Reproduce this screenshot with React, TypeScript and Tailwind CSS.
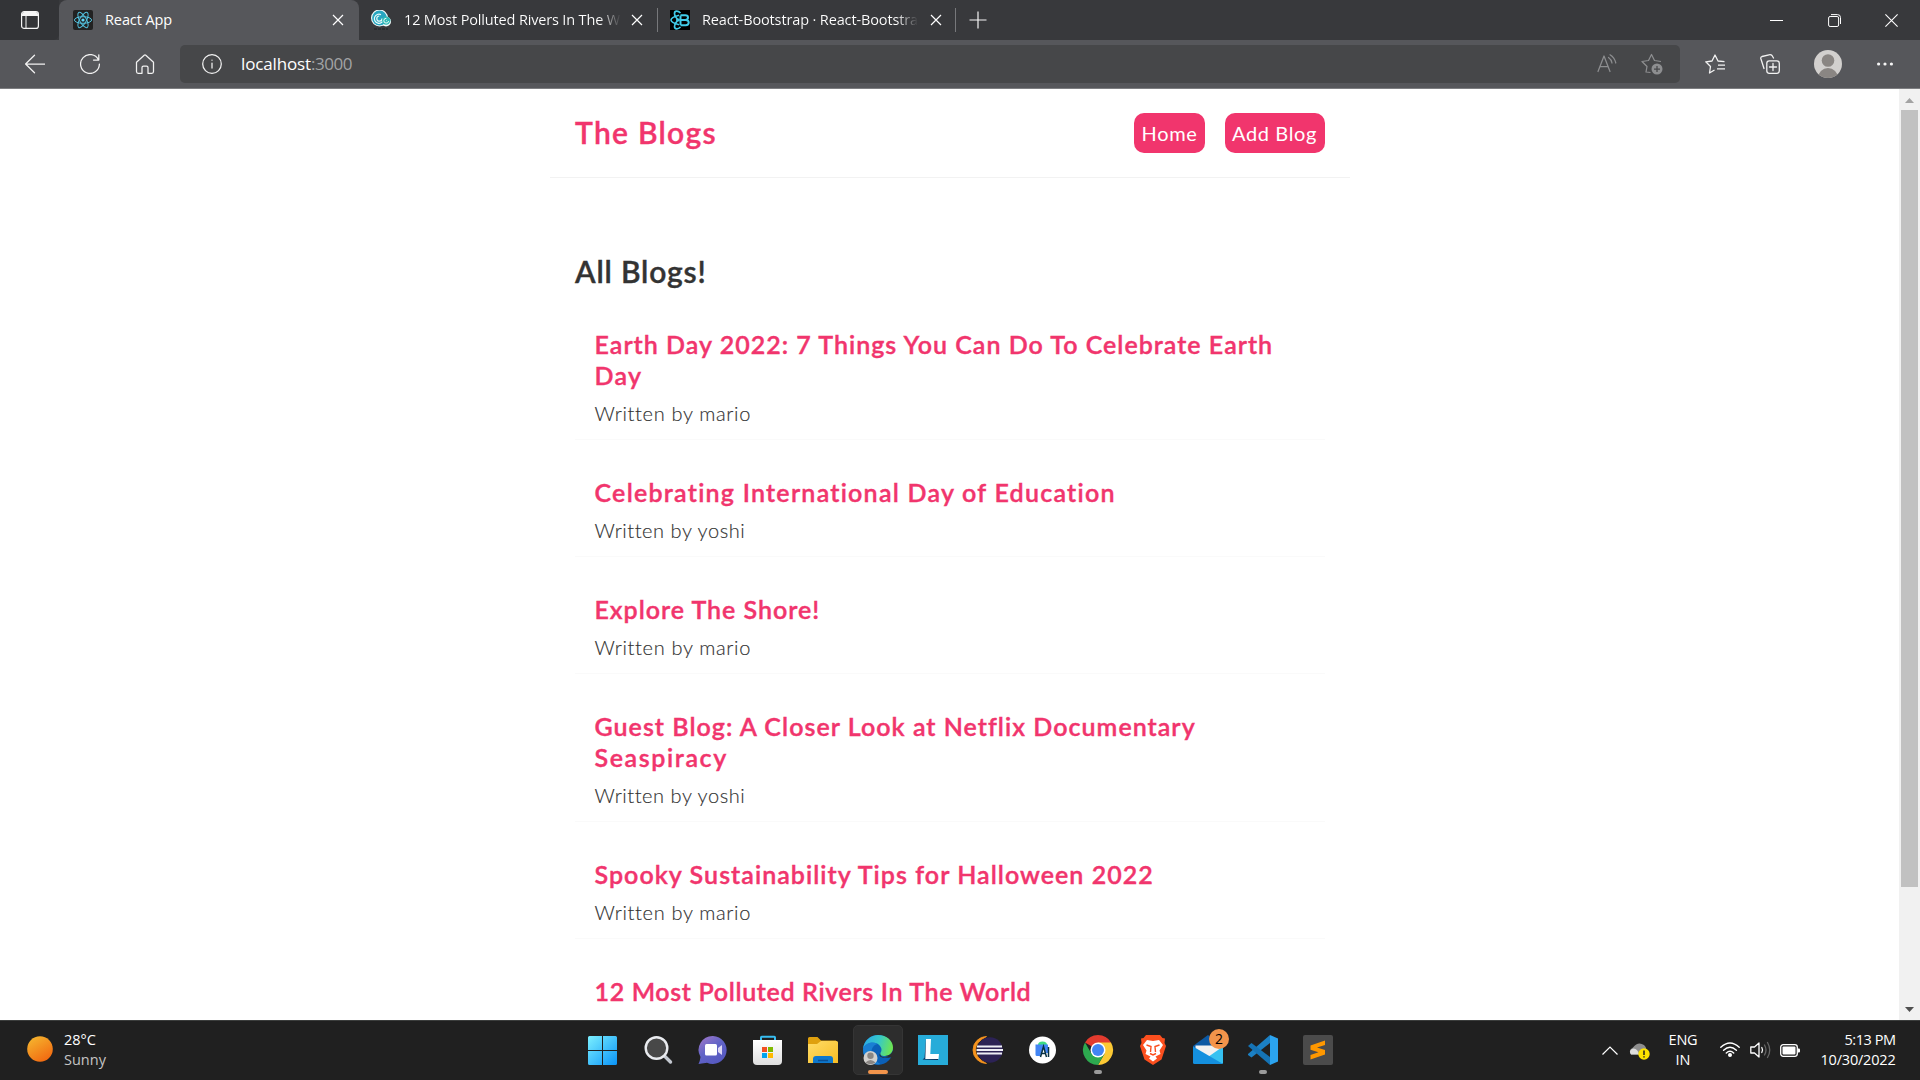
import type { ReactNode } from "react";

type Line = { text: string; tracking: string };
type Blog = { lines: Line[]; author?: "mario" | "yoshi" };

const blogs: Blog[] = [
  {
    lines: [
      { text: "Earth Day 2022: 7 Things You Can Do To Celebrate Earth", tracking: "tracking-[1.01px]" },
      { text: "Day", tracking: "tracking-[1.3px]" },
    ],
    author: "mario",
  },
  { lines: [{ text: "Celebrating International Day of Education", tracking: "tracking-[1.25px]" }], author: "yoshi" },
  { lines: [{ text: "Explore The Shore!", tracking: "tracking-[0.97px]" }], author: "mario" },
  {
    lines: [
      { text: "Guest Blog: A Closer Look at Netflix Documentary", tracking: "tracking-[1.04px]" },
      { text: "Seaspiracy", tracking: "tracking-[1.6px]" },
    ],
    author: "yoshi",
  },
  { lines: [{ text: "Spooky Sustainability Tips for Halloween 2022", tracking: "tracking-[1.05px]" }], author: "mario" },
  { lines: [{ text: "12 Most Polluted Rivers In The World", tracking: "tracking-[0.65px]" }] },
];

function Stroke({ children, className }: { children: ReactNode; className: string }) {
  return (
    <svg viewBox="0 0 20 20" className={className} fill="none" stroke="currentColor" strokeWidth="1.25" strokeLinecap="round" strokeLinejoin="round">
      {children}
    </svg>
  );
}

function Close({ className }: { className: string }) {
  return (
    <svg viewBox="0 0 12 12" className={className} fill="none" stroke="currentColor" strokeWidth="1.2">
      <path d="M1 1 11 11M11 1 1 11" />
    </svg>
  );
}

function ReactLogo() {
  return (
    <svg viewBox="0 0 20 20" className="size-5 shrink-0">
      <rect width="20" height="20" rx="2" fill="#222" />
      <g fill="none" stroke="#53c1de" strokeWidth="1">
        <ellipse cx="10" cy="10" rx="8.6" ry="3.3" />
        <ellipse cx="10" cy="10" rx="8.6" ry="3.3" transform="rotate(60 10 10)" />
        <ellipse cx="10" cy="10" rx="8.6" ry="3.3" transform="rotate(120 10 10)" />
      </g>
      <circle cx="10" cy="10" r="1.6" fill="#61dafb" />
    </svg>
  );
}

function WaveLogo() {
  return (
    <svg viewBox="0 0 20 20" className="size-5 shrink-0">
      <circle cx="8.5" cy="8" r="8.5" fill="#f4fbfb" />
      <circle cx="15" cy="11.5" r="5" fill="#f4fbfb" />
      <circle cx="8.5" cy="8" r="7.4" fill="#27a6c0" />
      <path d="M12.5 9.5A4.6 4.6 0 1 1 10 4.6M11 8.5A2.6 2.6 0 1 1 8.3 6" fill="none" stroke="#e9fafa" strokeWidth="1.2" />
      <circle cx="15.2" cy="10.6" r="4.2" fill="#2fb9b5" />
      <path d="M17.6 11A2.4 2.4 0 1 1 15.4 8.3M15.2 10.6h.6" fill="none" stroke="#e9fafa" strokeWidth="1" />
      <path d="M3 19h14" stroke="#26282b" strokeWidth="1.5" strokeDasharray="3 1" />
    </svg>
  );
}

function BootstrapLogo() {
  return (
    <svg viewBox="0 0 20 20" className="size-5 shrink-0">
      <rect width="20" height="20" fill="#000" />
      <g fill="none" stroke="#41cbe8">
        <path d="M10.5 5.5v9.5M10.5 5.3h4.8c3.6 0 3.6 4.6 0 4.6h-4.8h5.2c4 0 4 5.3 0 5.3h-5.2" strokeWidth="2" />
        <path d="M9 5.2C6 6 1 8 1 10s5 4 8 4.8" strokeWidth="1.6" />
        <path d="M10.5 3C8 .5 4.500.5 4.500 3.500S7 9 9.500 11M10.500 17c-2.500 2.500-6 2.500-6-.5S7 11 9.500 9" strokeWidth="1.7" />
      </g>
      <circle cx="7.2" cy="10" r="1.2" fill="#41cbe8" />
    </svg>
  );
}

function TitleBar() {
  return (
    <div className="flex h-10 items-stretch bg-[#38393c] text-[14.5px] text-white">
      <div className="flex w-[59px] items-center justify-center rounded-br-md bg-[#333437]">
        <svg viewBox="0 0 18 18" className="size-[18px]">
          <rect x=".6" y=".6" width="16.8" height="16.8" rx="2.5" fill="none" stroke="#f5f5f5" strokeWidth="1.2" />
          <path d="M1 3.500Q1 1 3.500 1h11Q17 1 17 3.500V5H1Z" fill="#f5f5f5" />
          <path d="M5 5v12" stroke="#f5f5f5" strokeWidth="1" />
        </svg>
      </div>
      <div className="flex w-[300px] items-center rounded-t-lg bg-[#56575b] pr-[15px] pl-[14px]">
        <ReactLogo />
        <span className="ml-3 flex-1 tracking-[-0.1px]">React App</span>
        <Close className="size-3" />
      </div>
      <div className="flex w-[298px] items-center pr-[14px] pl-3">
        <WaveLogo />
        <span className="ml-[13px] w-[217px] overflow-hidden bg-gradient-to-r from-white from-90% to-transparent bg-clip-text tracking-[-0.158px] whitespace-nowrap text-transparent">
          12 Most Polluted Rivers In The W
        </span>
        <Close className="ml-auto size-3" />
      </div>
      <div className="my-2 w-px bg-[#77787b]" />
      <div className="flex w-[297px] items-center pr-[13px] pl-3">
        <BootstrapLogo />
        <span className="ml-3 w-[216px] overflow-hidden bg-gradient-to-r from-white from-90% to-transparent bg-clip-text tracking-[-0.13px] whitespace-nowrap text-transparent">
          React-Bootstrap · React-Bootstra
        </span>
        <Close className="ml-auto size-3" />
      </div>
      <div className="my-2 w-px bg-[#77787b]" />
      <div className="flex items-center pl-[13px]">
        <svg viewBox="0 0 18 18" className="size-[18px]" stroke="#f5f5f5" strokeWidth="1.2">
          <path d="M9 .5v17M.5 9h17" />
        </svg>
      </div>
      <div className="ml-auto flex items-center gap-[44.5px] pr-[22px]">
        <svg viewBox="0 0 13 13" className="size-[13px]" stroke="#fff"><path d="M0 6.500h13" /></svg>
        <svg viewBox="0 0 13 13" className="size-[13px]" stroke="#fff" fill="none">
          <rect x=".6" y="2.5" width="10" height="10" rx="1.5" />
          <path d="M3 .6h6.500Q12.500.6 12.500 3.600V10" />
        </svg>
        <svg viewBox="0 0 13 13" className="size-[13px]" stroke="#fff" strokeWidth="1.1"><path d="M.4.400 12.600 12.600M12.600.400.400 12.600" /></svg>
      </div>
    </div>
  );
}

function Toolbar() {
  return (
    <div className="flex h-12 items-center bg-[#56575b] text-[#f2f2f2]">
      <Stroke className="ml-[25px] size-5"><path d="M20 10H.600M9.500 1.200.600 10l8.900 8.800" /></Stroke>
      <Stroke className="ml-[35px] size-5"><path d="M18.500 6A9.400 9.400 0 1 0 19.400 10M18.800.800V6H13.500" /></Stroke>
      <Stroke className="ml-[35px] size-5">
        <path d="M1.500 8.300 9.200 1.300Q10 .600 10.800 1.300L18.500 8.300V17.500Q18.500 19.300 16.800 19.300H13V13.500Q13 12 11.500 12H8.500Q7 12 7 13.500V19.300H3.200Q1.500 19.300 1.500 17.500Z" />
      </Stroke>
      <div className="ml-[25px] flex h-[38px] w-[1500px] items-center rounded-[5px] bg-[#464749]">
        <Stroke className="ml-[22px] size-5"><circle cx="10" cy="10" r="9.3" /><path d="M10 9v5M10 6v.2" /></Stroke>
        <span className="ml-[19px] text-[17px] tracking-[-0.135px] text-white">localhost</span>
        <span className="text-[17px] tracking-[-0.472px] text-[#a2a3a5]">:3000</span>
        <Stroke className="ml-auto size-5 text-[#8d8e90]">
          <path d="M1 17.500 7 2 13 17.500M3.200 12.500h7.800M11.500 3.500Q14.500 5.500 15 9M13 .800Q17.500 3.500 18.800 9" />
        </Stroke>
        <svg viewBox="0 0 22 22" className="mr-[17px] ml-[24px] size-[22px] text-[#8d8e90]" fill="none" stroke="currentColor" strokeWidth="1.25" strokeLinejoin="round">
          <path d="M9.500 19.500 5 19 6 13.500 1 8.500 7.500 7.500 10.500 1.500 13.500 7.500 20 8.500" />
          <circle cx="16" cy="16" r="5.5" fill="currentColor" stroke="none" />
          <path d="M16 13v6M13 16h6" stroke="#464749" />
        </svg>
      </div>
      <svg viewBox="0 0 20 20" className="ml-[25px] size-5" fill="none" stroke="currentColor" strokeWidth="1.3" strokeLinejoin="round">
        <path d="M9.500 16 4.500 19 5.500 12.500.800 7.800 7 7 10 1 13 7 19.500 7.600M13 11.200h7M12 14.800h8" />
      </svg>
      <svg viewBox="0 0 20 20" className="ml-[35px] size-5" fill="none" stroke="currentColor" strokeWidth="1.3" strokeLinejoin="round" strokeLinecap="round">
        <path d="M4 14.500.800 4.500Q.500 3 2 2.500L9 .800Q11 .400 12 1.500L13.500 4" />
        <rect x="6.8" y="6.8" width="12.5" height="12.5" rx="2.5" />
        <path d="M13 9.500v7M9.500 13h7" />
      </svg>
      <svg viewBox="0 0 28 28" className="ml-[34px] size-7">
        <clipPath id="profile"><circle cx="14" cy="14" r="14" /></clipPath>
        <g clipPath="url(#profile)">
          <rect width="28" height="28" fill="#d2d0ce" />
          <circle cx="14" cy="10.5" r="6.3" fill="#8a8683" />
          <circle cx="14" cy="28" r="10" fill="#8a8683" />
        </g>
      </svg>
      <svg viewBox="0 0 16 4" className="ml-[35px] h-1 w-4" fill="#f5f5f5">
        <circle cx="1.6" cy="2" r="1.6" /><circle cx="8" cy="2" r="1.6" /><circle cx="14.4" cy="2" r="1.6" />
      </svg>
    </div>
  );
}

function Page() {
  return (
    <div className="flex h-[931px] overflow-hidden bg-white font-['Lato',sans-serif] text-[#333]">
      <main className="ml-[550px] w-[800px] shrink-0">
        <nav className="flex h-[89px] items-start border-b border-[#f2f2f2] px-[25px] pt-6">
          <h1 className="-mt-px text-[30px] leading-10 font-semibold tracking-[1.28px] text-[#f1356d] [-webkit-text-stroke:0.4px]">The Blogs</h1>
          <div className="ml-auto flex gap-5 text-[20px] leading-10 text-white">
            <a className="w-[71px] rounded-[10px] bg-[#f1356d] pl-[7.5px] tracking-[0.672px]">Home</a>
            <a className="w-[100px] rounded-[10px] bg-[#f1356d] pl-[7px] tracking-[0.627px]">Add Blog</a>
          </div>
        </nav>
        <section className="mt-[73px] px-[25px]">
          <h2 className="mb-[0.5px] text-[30px] leading-10 font-semibold tracking-[0.83px] [-webkit-text-stroke:0.4px]">All Blogs!</h2>
          {blogs.map((blog) => (
            <article key={blog.lines[0].text} className="border-b border-[#fafafa] pt-[37px] pr-5 pb-[13px] pl-[19.5px]">
              <h3 className="mb-[8.8px] text-[25px] leading-[31.25px] font-semibold whitespace-nowrap text-[#f1356d] [-webkit-text-stroke:0.4px]">
                {blog.lines.map((line) => <div key={line.text} className={line.tracking}>{line.text}</div>)}
              </h3>
              {blog.author && (
                <p className={`text-[20px] leading-[26px] font-light [-webkit-text-stroke:0.15px] ${blog.author === "mario" ? "tracking-[0.666px]" : "tracking-[0.56px]"}`}>
                  Written by {blog.author}
                </p>
              )}
            </article>
          ))}
        </section>
      </main>
      <div className="ml-auto flex w-[21px] flex-col items-center bg-[#f1f1f1]">
        <svg viewBox="0 0 9 5" className="mt-[9px] h-[5px] w-[9px]" fill="#a3a3a3"><path d="M0 5 4.500 0 9 5Z" /></svg>
        <div className="mt-[7px] h-[777px] w-[17px] bg-[#c1c1c1]" />
        <svg viewBox="0 0 9 5" className="mt-auto mb-2 h-[5px] w-[9px]" fill="#505050"><path d="M0 0 4.500 5 9 0Z" /></svg>
      </div>
    </div>
  );
}

function Icon({ children }: { children: ReactNode }) {
  return <svg viewBox="0 0 30 30" className="size-[30px] overflow-visible">{children}</svg>;
}

function TaskIcons() {
  return (
    <div className="flex items-start gap-[25px] pt-[14px]">
      <Icon>
        <linearGradient id="win" x1="0" y1="0" x2="1" y2="1"><stop stopColor="#7cf0ff" /><stop offset="1" stopColor="#0a94f8" /></linearGradient>
        <path d="M1.500 1H14V15H0V2.500Q0 1 1.500 1ZM15 1H27.500Q29 1 29 2.500V15H15ZM0 16H14V30H1.500Q0 30 0 28.500ZM15 16H29V28.500Q29 30 27.500 30H15Z" fill="url(#win)" />
      </Icon>
      <Icon>
        <path d="M21.500 21 27.500 27" stroke="#c3c8d0" strokeWidth="3.4" strokeLinecap="round" />
        <circle cx="13.5" cy="13" r="10.8" fill="#484848" stroke="#e9ebef" strokeWidth="2.4" />
      </Icon>
      <Icon>
        <linearGradient id="chat" x1="0" y1="0" x2=".7" y2="1"><stop stopColor="#a678c8" /><stop offset=".5" stopColor="#6264c7" /><stop offset="1" stopColor="#5558c0" /></linearGradient>
        <path d="M15 1A14 14 0 1 1 9 27.800L.500 29Q2 26 2.500 22A14 14 0 0 1 15 1Z" fill="url(#chat)" />
        <rect x="7" y="9" width="12" height="11.5" rx="1.5" fill="#fff" /><path d="M20 13 24 10V20L20 17Z" fill="#ded8f5" />
      </Icon>
      <Icon>
        <path d="M8 6V2.500Q8 1.800 8.700 1.800H21.300Q22 1.800 22 2.500V6" fill="none" stroke="#37bdf0" strokeWidth="2" />
        <linearGradient id="store" x1="0" y1="0" x2="0" y2="1"><stop stopColor="#fff" /><stop offset="1" stopColor="#dedede" /></linearGradient>
        <path d="M0 5H29V26Q29 30 25 30H4Q0 30 0 26Z" fill="url(#store)" />
        <path d="M9 12h5v5H9Z" fill="#f25022" /><path d="M15 12h5v5h-5Z" fill="#7fba00" /><path d="M9 18h5v5H9Z" fill="#00a4ef" /><path d="M15 18h5v5h-5Z" fill="#ffb900" />
      </Icon>
      <Icon>
        <path d="M0 3.500Q0 2 1.500 2H9.500L13 5.500H28V15H0Z" fill="#dfa00e" />
        <linearGradient id="folder" x1="0" y1="0" x2="1" y2="1"><stop stopColor="#ffdc67" /><stop offset="1" stopColor="#f8bd24" /></linearGradient>
        <path d="M0 9H9L13 6H28.500Q30 6 30 7.500V28H0Z" fill="url(#folder)" />
        <path d="M5 28V24Q5 21 8 21H22Q25 21 25 24V28Z" fill="#0e78cd" /><path d="M10 25.500H20" stroke="#0a4f94" strokeWidth="1.5" />
      </Icon>
      <div className="relative size-[30px]">
        <div className="absolute -top-[10px] -left-[10px] size-[50px] rounded-[5px] border border-[#353535] bg-[#2d2d2d]" />
        <div className="absolute top-[35px] left-[5px] h-1 w-5 rounded-full bg-[#f2944b]" />
        <svg viewBox="0 0 30 30" className="relative size-[30px]">
          <linearGradient id="edgeTop" x1="0" y1=".3" x2="1" y2=".5"><stop stopColor="#2aa9e8" /><stop offset=".5" stopColor="#36c8c9" /><stop offset="1" stopColor="#6fe64e" /></linearGradient>
          <circle cx="15" cy="15" r="15" fill="#0b60b8" />
          <path d="M0 14C1 5 8 0 15 0c9 0 15 6 15 12.500C30 18 26 21 22 21c-4 0-5.500-1.500-4.500-3S20 13 15 9C9 6 2 9 0 14Z" fill="url(#edgeTop)" />
          <path d="M0 14C2 8 9 6 14.500 9c-4 1-6 4-6 8 0 5 3 9 9 12C8 31 0 24 0 14Z" fill="#1a7fd3" />
          <path d="M17.500 18c-1 2 1 4.500 5 4.500 3 0 5.500-1 7.500-2.500l-1.500 1.500c-2 1.500-4 1.500-6 1.500-5 0-7.500-2.500-5-5Z" fill="#2d2d2d" />
          <path d="M30 15.500V21.500L27.500 22.500Q25 21.500 22 21 28 20.500 30 15.500Z" fill="#2d2d2d" />
          <circle cx="7.5" cy="23" r="7" fill="#d2d0ce" /><circle cx="7.5" cy="20.8" r="3.2" fill="#8a8683" /><path d="M2.500 27.500Q7.500 22.500 12.500 27.500Q7.500 31 2.500 27.500Z" fill="#8a8683" />
        </svg>
      </div>
      <Icon>
        <rect width="30" height="30" fill="#27acd9" />
        <path d="M8 4 6.500 23 4.500 24.500 20 25V21L12 19V4Z" fill="#0b2a55" /><path d="M8 4H13L12.300 19H21L20.500 24H7.300Z" fill="#fff" />
      </Icon>
      <Icon>
        <path d="M13.500 1.500A13.500 13.500 0 0 0 13.500 28.500Q2.500 23 2.500 15T13.500 1.500Z" fill="#f7941e" stroke="#f7941e" strokeWidth=".8" />
        <circle cx="17" cy="15" r="12.8" fill="#2c2255" />
        <path d="M4 11.500H29M3.500 15H30M4 18.500H29" stroke="#eeeef6" strokeWidth="1.9" />
      </Icon>
      <Icon>
        <circle cx="14.5" cy="15" r="13.5" fill="#fff" />
        <path d="M10 10Q10 6.500 14.500 6.500T19 10Z" fill="#3ddc84" /><path d="M7.500 9.500H20V18H18L15.500 12 12 21H9Q7.500 21 7.500 19.500Z" fill="#4285f4" />
        <path d="M12.500 22 15.500 11.500 18.500 22M13.500 18.500h4M20.500 12V22" stroke="#073042" strokeWidth="1.5" fill="none" />
      </Icon>
      <Icon>
        <path d="M15 15 2 7.500A15 15 0 0 1 28 7.500Z" fill="#e33b2e" /><path d="M15 7.500H28A15 15 0 0 1 15 30L21.500 18.700Z" fill="#fcc934" />
        <path d="M2 7.500 8.500 18.700 15 22 21.500 18.700 15 30A15 15 0 0 1 2 7.500Z" fill="#2da94f" />
        <circle cx="15" cy="15" r="7.5" fill="#fff" /><circle cx="15" cy="15" r="6" fill="#4285f4" />
        <rect x="11" y="35" width="8" height="4" rx="2" fill="#9b9b9b" />
      </Icon>
      <Icon>
        <path d="M8 0H22L24.500 3 27 3.500 26.500 8 28 11 23.500 24.500 15 30 6.500 24.500 2 11 3.500 8 3 3.500 5.500 3Z" fill="#fb4f1e" />
        <path d="M9 5 15 6 21 5 25 10 21.500 15.500 22.500 19 17.500 21.500 19 23.500 15 26.500 11 23.500 12.500 21.500 7.500 19 8.500 15.500 5 10Z" fill="#fff" />
        <path d="M8.500 10 13 11.500 12.500 17M21.500 10 17 11.500 17.500 17M12 18.500 15 20 18 18.500" stroke="#fb4f1e" strokeWidth="1.4" fill="none" />
      </Icon>
      <div className="relative size-[30px]">
        <Icon>
          <path d="M0 11 15 0 30 11V20H0Z" fill="#0c59a4" /><path d="M2.500 10.500H27.500V20L15 24 2.500 14Z" fill="#f1f1f1" />
          <path d="M30 11.500V27.500Q30 29 28.500 29H5Z" fill="#35c1f1" /><path d="M0 11.500 30 29H1.500Q0 29 0 27.500Z" fill="#1490df" />
        </Icon>
        <div className="absolute -top-[6px] left-4 flex size-5 items-center justify-center rounded-full bg-[#f2944b] text-[14px] text-black">2</div>
      </div>
      <Icon>
        <path d="M22 0V8L3.500 22.500 0 20V19L22 0Z" fill="#1b80c4" /><path d="M0 11 3.500 8 22 22V30L0 11Z" fill="#1573b5" />
        <path d="M22 0 30 3.500V26.500L22 30Z" fill="#2ba4f0" />
        <rect x="11" y="35" width="8" height="4" rx="2" fill="#9b9b9b" />
      </Icon>
      <Icon>
        <rect width="30" height="30" rx="2" fill="#4b4b4b" />
        <path d="M7.500 10.500 22 5.500V10L14 12.500 22 15V19.500L7.500 24.500V20L15.500 17.200 7.500 14.800Z" fill="#ff9800" />
      </Icon>
    </div>
  );
}

function Taskbar() {
  return (
    <div className="flex h-[60px] border-t border-[#3b3d3c] bg-[#202020] text-[14.5px] leading-5 text-white">
      <div className="flex w-[588px] pl-[27px]">
        <svg viewBox="0 0 26 26" className="mt-[15px] size-[26px]">
          <linearGradient id="sun" x1=".2" y1="0" x2=".8" y2="1"><stop stopColor="#f5b52e" /><stop offset="1" stopColor="#f2650f" /></linearGradient>
          <circle cx="13" cy="13" r="12.8" fill="url(#sun)" />
        </svg>
        <div className="ml-[11px] pt-[9px]">
          <div>28°C</div>
          <div className="text-[#c4c4c4]">Sunny</div>
        </div>
      </div>
      <TaskIcons />
      <div className="ml-auto flex pr-[24.5px]">
        <svg viewBox="0 0 16 9" className="mt-[25px] h-[9px] w-4" fill="none" stroke="#fff" strokeWidth="1.2"><path d="M.5 8.500 8 1 15.500 8.500" /></svg>
        <svg viewBox="0 0 21 18" className="mt-[21px] ml-[11px] h-[18px] w-[21px]">
          <path d="M2 12.500Q-1 8 4 5.500Q9-1 15 3Q19 6 17 12.500Z" fill="#8e8e8e" /><path d="M2 12.500Q-1 8 4.500 6.500Q9 7 10 12.500Z" fill="#ddd" />
          <circle cx="15" cy="12" r="5.7" fill="#fde300" /><path d="M15 8.500V13M15 14.300v1.200" stroke="#222" strokeWidth="1.5" />
        </svg>
        <div className="ml-[18px] w-[30px] pt-[9px] text-center">
          <div className="tracking-[-0.177px]">ENG</div>
          <div>IN</div>
        </div>
        <svg viewBox="0 0 20 15" className="mt-[21px] ml-[22px] h-[15px] w-5" fill="none" stroke="#fff" strokeWidth="1.4" strokeLinecap="round">
          <path d="M.8 5.300Q10-3.500 19.200 5.300M3.600 8.200Q10 2.200 16.400 8.200M6.300 11Q10 7.600 13.700 11" /><circle cx="10" cy="13" r="1.3" fill="#fff" />
        </svg>
        <svg viewBox="0 0 21 18" className="mt-[20px] ml-[10px] h-[18px] w-[21px]" fill="none" stroke="#fff" strokeWidth="1.3" strokeLinecap="round" strokeLinejoin="round">
          <path d="M.8 6H4.500L9 2V16L4.500 12H.8ZM11.800 6.500Q13.300 9 11.800 11.500" /><path d="M14.500 4Q17.500 9 14.500 14M17.500 1.500Q22 9 17.500 16.500" stroke="#666" />
        </svg>
        <svg viewBox="0 0 20 13" className="mt-[23px] ml-[9px] h-[13px] w-5">
          <rect x=".7" y=".7" width="16.6" height="11.6" rx="2.5" fill="none" stroke="#fff" strokeWidth="1.3" />
          <rect x="2.5" y="2.5" width="13" height="8" rx="1" fill="#fff" />
          <path d="M18 4.500h1q1 0 1 1v2q0 1-1 1h-1Z" fill="#fff" />
        </svg>
        <div className="ml-[19.5px] w-[76px] pt-[9px] text-right">
          <div className="tracking-[-0.46px]">5:13 PM</div>
          <div className="tracking-[-0.197px]">10/30/2022</div>
        </div>
      </div>
    </div>
  );
}

export default function App() {
  return (
    <div className="h-[1080px] w-[1920px] overflow-hidden font-['Open_Sans',sans-serif]">
      <TitleBar />
      <Toolbar />
      <div className="h-px bg-[#7d7e81]" />
      <Page />
      <Taskbar />
    </div>
  );
}
